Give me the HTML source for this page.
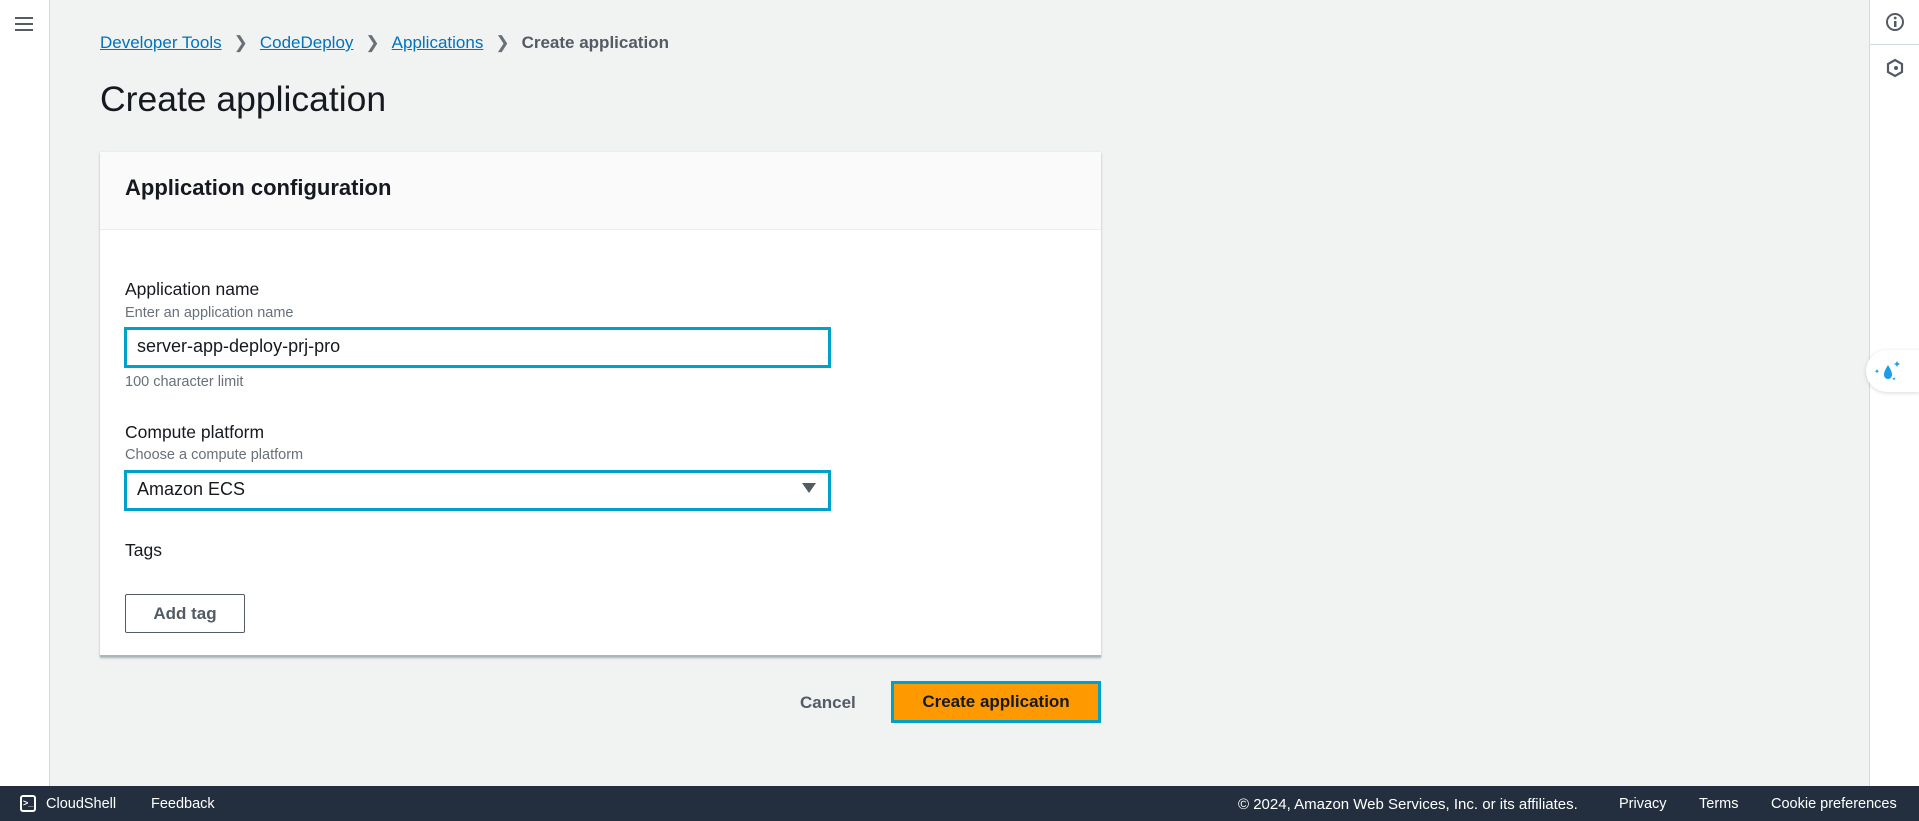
<!DOCTYPE html>
<html><head><meta charset="utf-8"><style>
*{box-sizing:border-box;margin:0;padding:0}
body{width:1919px;height:821px;overflow:hidden;background:#f1f2f2;font-family:"Liberation Sans",sans-serif;color:#16191f;position:relative}
.side{position:absolute;left:0;top:0;width:50px;height:786px;background:#fff;border-right:1px solid #d5dbdb}
.rside{position:absolute;left:1869px;top:0;width:50px;height:786px;background:#fff;border-left:1px solid #d5dbdb}
.ab{position:absolute}
.bc{top:33px;left:100px;font-size:17px;color:#545b64}
.bc a{color:#0073bb;text-decoration:underline}
.bc .s{display:inline-block;margin:0 12px;color:#687078}
h1{position:absolute;left:100px;top:79px;font-size:35.5px;font-weight:400;color:#16191f}
.card{position:absolute;left:100px;top:152px;width:1001px;height:505px;background:#fff;box-shadow:0 1px 2px rgba(0,28,36,.3);border-bottom:2px solid #aab7b8}
.ch{height:78px;background:#fafafa;border-bottom:1px solid #eaeded;padding:23px 25px;font-size:22px;font-weight:700}
.lbl{font-size:17.5px}
.desc{font-size:14.5px;color:#687078}
.inp{border:3px solid #00a1c9;height:41px;width:707px;padding:6px 10px;font-size:18px}
</style></head><body>
<div class="side"><div class="ab" style="left:15px;top:17px;width:18px"><div style="height:2px;background:#545b64;margin-bottom:4px"></div><div style="height:2px;background:#545b64;margin-bottom:4px"></div><div style="height:2px;background:#545b64"></div></div></div>
<div class="rside">
<svg class="ab" style="left:15px;top:12px" width="20" height="20" viewBox="0 0 20 20"><circle cx="10" cy="10" r="8" fill="none" stroke="#545b64" stroke-width="2"/><rect x="9" y="9" width="2.5" height="6" fill="#545b64"/><circle cx="10.2" cy="6" r="1.4" fill="#545b64"/></svg>
<div class="ab" style="left:0;top:44px;width:50px;border-top:1px solid #d5dbdb"></div>
<svg class="ab" style="left:15px;top:58px" width="20" height="20" viewBox="0 0 20 20"><path d="M10 2L17 6v8l-7 4-7-4V6z" fill="none" stroke="#545b64" stroke-width="2.2"/><circle cx="11" cy="10" r="2" fill="#545b64"/></svg>
<div class="ab" style="left:-4px;top:350px;width:54px;height:42px;background:#fff;border-radius:21px 0 0 21px;box-shadow:0 1px 4px rgba(0,0,0,.15)"><svg class="ab" style="left:8px;top:10px" width="28" height="24" viewBox="0 0 28 24"><path d="M14 5C11 10 10 12 10 15a4 4 0 0 0 8 0c0-3-1-5-4-10z" fill="#1e9be9"/><path d="M23 1l1 2 2 1-2 1-1 2-1-2-2-1 2-1z M3 9l.7 1.5 1.5.7-1.5.7L3 13.4l-.7-1.5L.8 11.2l1.5-.7z M20 17l.6 1.2 1.2.6-1.2.6L20 20.6l-.6-1.2-1.2-.6 1.2-.6z" fill="#1e9be9"/></svg></div>
</div>
<div class="ab bc"><a>Developer Tools</a><span class="s">&#x276F;</span><a>CodeDeploy</a><span class="s">&#x276F;</span><a>Applications</a><span class="s">&#x276F;</span><b style="color:#545b64">Create application</b></div>
<h1>Create application</h1>
<div class="card"><div class="ch">Application configuration</div>
<div class="ab lbl" style="left:25px;top:127px">Application name</div>
<div class="ab desc" style="left:25px;top:153px">Enter an application name</div>
<div class="ab inp" style="left:24px;top:175px">server-app-deploy-prj-pro</div>
<div class="ab desc" style="left:25px;top:222px">100 character limit</div>
<div class="ab lbl" style="left:25px;top:270px">Compute platform</div>
<div class="ab desc" style="left:25px;top:295px">Choose a compute platform</div>
<div class="ab inp" style="left:24px;top:318px">Amazon ECS<span style="position:absolute;right:12px;top:10px;width:0;height:0;border-left:7px solid transparent;border-right:7px solid transparent;border-top:10px solid #545b64"></span></div>
<div class="ab lbl" style="left:25px;top:388px">Tags</div>
<div class="ab" style="left:25px;top:442px;width:120px;height:39px;border:1px solid #545b64;border-radius:2px;font-size:17px;font-weight:700;color:#545b64;text-align:center;line-height:37px">Add tag</div>
</div>
<div class="ab" style="left:800px;top:693px;font-size:17px;font-weight:700;color:#545b64">Cancel</div>
<div class="ab" style="left:891px;top:681px;width:210px;height:42px;background:#ff9900;border:3px solid #00a1c9;font-size:17px;font-weight:700;text-align:center;line-height:36px">Create application</div>
<div class="ab" style="left:0;top:786px;width:1919px;height:35px;background:#232f3e;color:#fff;font-size:14.5px">
<div class="ab" style="left:20px;top:9px;width:16px;height:17px;border:2px solid #fff;border-radius:3px;font-size:9px;font-weight:700;line-height:12px;padding-left:1px">&gt;_</div>
<span class="ab" style="left:46px;top:10px">CloudShell</span>
<span class="ab" style="left:151px;top:10px">Feedback</span>
<span class="ab" style="left:1238px;top:10px;font-size:15px">© 2024, Amazon Web Services, Inc. or its affiliates.</span>
<span class="ab" style="left:1619px;top:10px">Privacy</span>
<span class="ab" style="left:1699px;top:10px">Terms</span>
<span class="ab" style="left:1771px;top:10px">Cookie preferences</span>
</div>
</body></html>
